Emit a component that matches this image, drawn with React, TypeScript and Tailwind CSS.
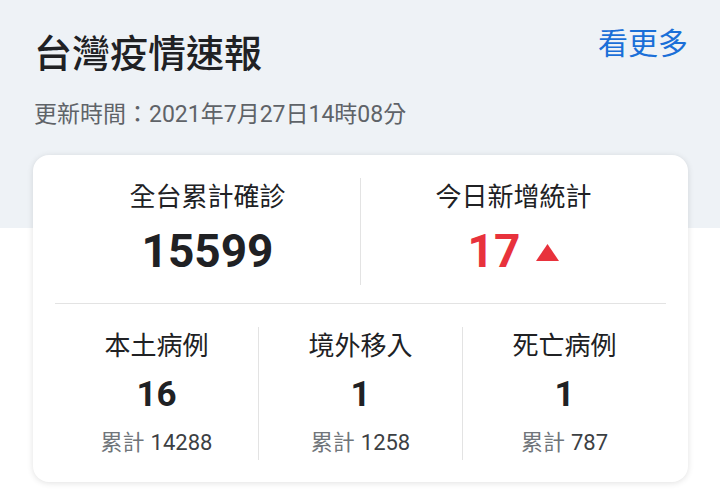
const font = { fontFamily: 'Roboto, "Noto Sans CJK TC", sans-serif' };

function BigStat({ label, value, red }: { label: string; value: string; red?: boolean }) {
  return (
    <div className="flex-1 flex flex-col items-center">
      <div className="mt-[2px] text-[26px] leading-[34px] text-[#202124]">{label}</div>
      <div className={`mt-[10px] flex items-center text-[46px] leading-[54px] font-bold ${red ? "text-[#e8323c]" : "text-[#202124]"}`}>
        {value}
        {red && (
          <svg className="ml-[16px] mt-[2px]" width="23" height="17" viewBox="0 0 23 17">
            <polygon points="11.5,0 23,17 0,17" fill="#e8323c" />
          </svg>
        )}
      </div>
    </div>
  );
}

function SmallStat({ label, value, total }: { label: string; value: string; total: string }) {
  return (
    <div className="flex-1 flex flex-col items-center">
      <div className="mt-[3px] text-[26px] leading-[32px] text-[#202124]">{label}</div>
      <div className="mt-[12px] text-[35px] leading-[42px] font-bold text-[#202124]">{value}</div>
      <div className="mt-[13px] text-[22px] leading-[28px]">
        <span className="text-[#70757a]">累計</span>
        <span className="ml-[6px] text-[#3c4043]">{total}</span>
      </div>
    </div>
  );
}

export default function App() {
  return (
    <div
      className="w-[720px] h-[497px] overflow-hidden bg-[linear-gradient(to_bottom,#eef2f6_228px,#ffffff_228px)]"
      style={font}
    >
      <div className="flex justify-between items-start pl-[34px] pr-[32px]">
        <h1 className="mt-[31px] text-[38px] leading-[46px] font-medium text-[#202124]">台灣疫情速報</h1>
        <a className="mt-[26px] text-[30px] leading-[36px] text-[#1a6fd8]">看更多</a>
      </div>
      <div className="mt-[24px] pl-[34px] text-[23px] leading-[28px] text-[#5f6368]">
        更新時間：2021年7月27日14時08分
      </div>
      <div className="mt-[26px] ml-[33px] w-[655px] bg-white rounded-[16px] shadow-[0_1px_6px_rgba(0,0,0,0.12)] px-[22px] pt-[23px] pb-[22px]">
        <div className="flex h-[107px]">
          <BigStat label="全台累計確診" value="15599" />
          <div className="w-px bg-[#e3e3e3]" />
          <BigStat label="今日新增統計" value="17" red />
        </div>
        <div className="mt-[18px] h-px bg-[#e3e3e3]" />
        <div className="mt-[23px] flex h-[133px]">
          <SmallStat label="本土病例" value="16" total="14288" />
          <div className="w-px bg-[#e3e3e3]" />
          <SmallStat label="境外移入" value="1" total="1258" />
          <div className="w-px bg-[#e3e3e3]" />
          <SmallStat label="死亡病例" value="1" total="787" />
        </div>
      </div>
    </div>
  );
}
